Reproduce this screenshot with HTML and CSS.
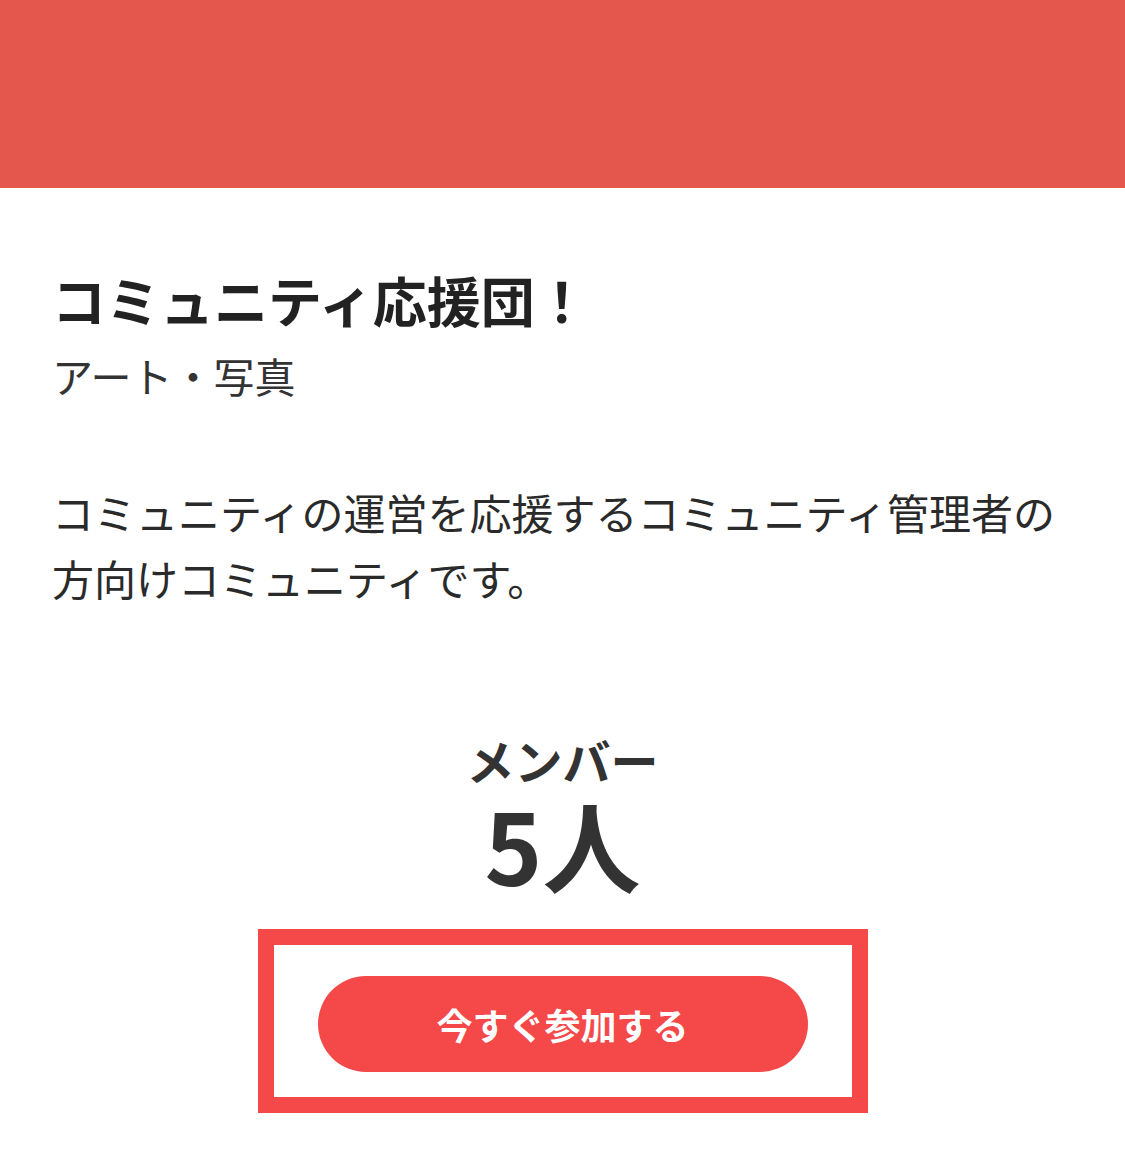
FILE: index.html
```html
<!DOCTYPE html>
<html lang="ja">
<head>
<meta charset="utf-8">
<title>コミュニティ応援団！</title>
<link rel="stylesheet" href="styles.css">
</head>
<body>
<header class="hero"></header>
<main class="content">
  <h1 class="title">コミュニティ応援団！</h1>
  <p class="category">アート・写真</p>
  <p class="desc">コミュニティの運営を応援するコミュニティ管理者の方向けコミュニティです。</p>
  <section class="members">
    <div class="members-label">メンバー</div>
    <div class="members-count">5人</div>
  </section>
  <div class="join-frame">
    <button class="join-button" type="button">今すぐ参加する</button>
  </div>
</main>
</body>
</html>
```
FILE: styles.css
```css
html, body {
  margin: 0;
  padding: 0;
  background: #ffffff;
}
body {
  font-family: "Noto Sans CJK JP", "Noto Sans", sans-serif;
  color: #333333;
}
.hero {
  height: 188px;
  background: #e3574d;
}
.content {
  padding: 74px 52px 0;
}
.title {
  margin: 0;
  font-size: 54px;
  font-weight: 700;
  line-height: 1.4;
  color: #222222;
}
.category {
  margin: 7px 0 0;
  font-size: 41px;
  line-height: 1.5;
  color: #333333;
}
.desc {
  margin: 73px 0 0;
  font-size: 42px;
  line-height: 66px;
  color: #2a2a2a;
}
.members {
  margin-top: 117px;
  display: flex;
  flex-direction: column;
  align-items: center;
}
.members-label {
  font-size: 48px;
  font-weight: 700;
  line-height: 1.3;
  color: #333333;
}
.members-count {
  font-size: 98px;
  font-weight: 700;
  line-height: 1.1;
  color: #333333;
}
.join-frame {
  box-sizing: border-box;
  width: 610px;
  margin: 31px auto 0;
  border: 16px solid #f54848;
  padding: 31px 44px 25px;
}
.join-button {
  display: block;
  width: 100%;
  height: 96px;
  border: none;
  border-radius: 48px;
  background: #f54848;
  color: #ffffff;
  font-family: "Noto Sans CJK JP", "Noto Sans", sans-serif;
  font-size: 36px;
  font-weight: 700;
  letter-spacing: 0;
  padding: 0;
}
```
